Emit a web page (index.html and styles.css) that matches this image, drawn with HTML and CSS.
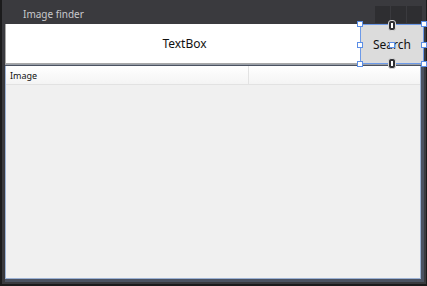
FILE: index.html
```html
<!DOCTYPE html>
<html lang="en">
<head>
    <meta charset="UTF-8">
    <meta name="viewport" content="width=device-width, initial-scale=1.0">
    <title>Image finder</title>
    <link rel="stylesheet" href="styles.css">
</head>
<body>
    <div class="window">
        <div class="titlebar">
            <span class="title">Image finder</span>
            <div class="caption-buttons">
                <span class="cap-btn"></span>
                <span class="cap-btn"></span>
                <span class="cap-btn"></span>
            </div>
        </div>
        <div class="client">
            <div class="search-row">
                <div class="textbox">TextBox</div>
                <div class="search-btn">
                    Search
                    <!-- designer selection handles -->
                    <span class="handle h-tl"></span>
                    <span class="handle h-tc"></span>
                    <span class="handle h-tr"></span>
                    <span class="handle h-ml"></span>
                    <span class="handle h-mc"></span>
                    <span class="handle h-mr"></span>
                    <span class="handle h-bl"></span>
                    <span class="handle h-bc"></span>
                    <span class="handle h-br"></span>
                    <span class="anchor a-top"></span>
                    <span class="anchor a-bottom"></span>
                </div>
            </div>
            <div class="listview">
                <div class="list-header">
                    <div class="col col-image">Image</div>
                    <div class="col col-rest"></div>
                </div>
                <div class="list-body"></div>
            </div>
        </div>
    </div>
</body>
</html>
```

FILE: styles.css
```css
body {
  margin: 0;
  background-color: #1b1b1c;
  font-family: "Segoe UI", "Noto Sans", sans-serif;
}

.window {
  width: 424px;
  height: 284px;
  margin-left: 2px;
  background-color: #3a3a3e;
  display: flex;
  flex-direction: column;
}

/* Title bar */
.titlebar {
  height: 24px;
  display: flex;
  justify-content: space-between;
  flex-shrink: 0;
}

.title {
  color: #c9c9cc;
  font-size: 10px;
  padding-left: 21px;
  padding-top: 7px;
}

.caption-buttons {
  display: flex;
  gap: 1px;
  padding-right: 4px;
  margin-top: 6px;
}

.cap-btn {
  width: 15px;
  height: 17px;
  background-color: #2e2e31;
}

/* Client area */
.client {
  flex: 1;
  display: flex;
  flex-direction: column;
  margin: 0 2px 2px 3px;
  background-color: #4b5261;
  padding: 0 3px 3px 0;
}

.search-row {
  height: 40px;
  display: flex;
  flex-shrink: 0;
  border-bottom: 1px solid #9aa0a8;
}

.textbox {
  flex: 1;
  background-color: #ffffff;
  display: flex;
  align-items: center;
  justify-content: center;
  font-size: 12px;
  color: #111;
  padding-left: 3px;
  border-left: 1px solid #a8a8a8;
  border-bottom: 1px solid #a8a8a8;
}

.search-btn {
  position: relative;
  width: 62px;
  background-color: #dcdcdc;
  border: 1px solid #6d9ae8;
  display: flex;
  align-items: center;
  justify-content: center;
  font-size: 12px;
  color: #111;
  margin-right: -3px;
}

.handle {
  position: absolute;
  width: 4px;
  height: 4px;
  background-color: #ffffff;
  border: 1px solid #5b8ee6;
}

.h-tl { left: -4px; top: -4px; }
.h-tc { left: 28px; top: -4px; }
.h-tr { right: -4px; top: -4px; }
.h-ml { left: -4px; top: 17px; }
.h-mc { left: 28px; top: 17px; }
.h-mr { right: -4px; top: 17px; }
.h-bl { left: -4px; bottom: -4px; }
.h-bc { left: 28px; bottom: -4px; }
.h-br { right: -4px; bottom: -4px; }

.anchor {
  position: absolute;
  left: 27px;
  width: 6px;
  height: 9px;
  background-color: #2f2f33;
  border: 1px solid #d8d8d8;
  border-radius: 3px;
}

.anchor::after {
  content: "";
  position: absolute;
  left: 2px;
  top: 2px;
  width: 2px;
  height: 5px;
  background-color: #ffffff;
}

.a-top { top: -5px; }
.a-bottom { bottom: -6px; }

/* List view */
.listview {
  flex: 1;
  display: flex;
  flex-direction: column;
  background-color: #f0f0f0;
  border-left: 1px solid #9cb2d4;
  border-bottom: 1px solid #9cb2d4;
  border-right: 1px solid #9cb2d4;
  margin-top: 1px;
}

.list-header {
  height: 18px;
  display: flex;
  background: linear-gradient(#ffffff, #f4f4f4);
  border-bottom: 1px solid #e2e2e2;
}

.col {
  font-size: 9px;
  color: #111;
  display: flex;
  align-items: center;
  padding-left: 4px;
}

.col-image {
  width: 238px;
  border-right: 1px solid #e3e3e3;
}

.col-rest {
  flex: 1;
}

.list-body {
  flex: 1;
}
```
